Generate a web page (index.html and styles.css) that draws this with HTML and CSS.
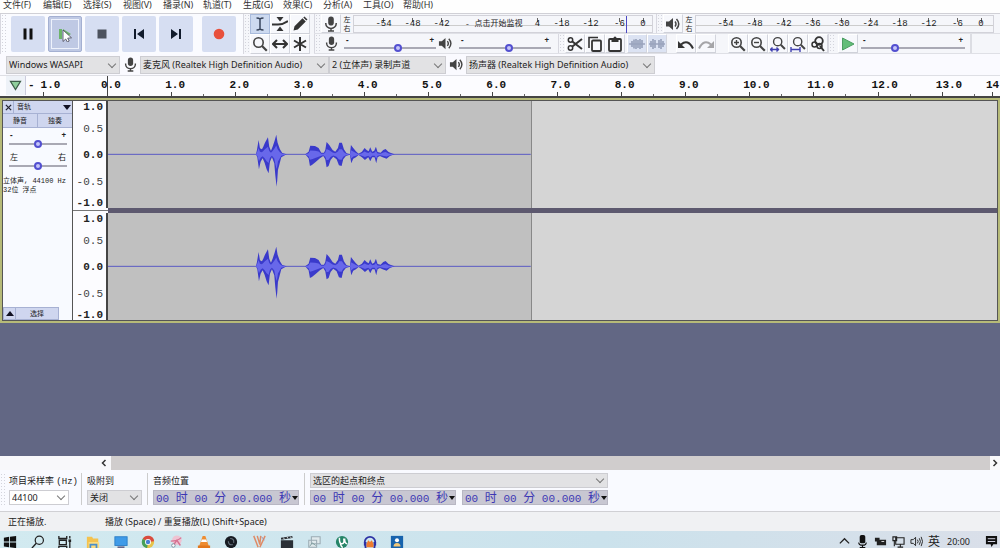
FILE: index.html
```html
<!DOCTYPE html>
<html lang="zh-CN">
<head>
<meta charset="utf-8">
<title>Audacity</title>
<link rel="stylesheet" href="styles.css">
</head>
<body>
<svg class="defs" aria-hidden="true">
  <symbol id="mic" viewBox="0 0 16 16"><rect x="5.2" y="0.5" width="5.6" height="9" rx="2.8" fill="#444"/><path d="M2.8 7v.8a5.2 4.6 0 0 0 10.4 0V7M8 12.4V15M5 15h6" fill="none" stroke="#444" stroke-width="1.5"/></symbol>
  <symbol id="speaker" viewBox="0 0 16 16"><path d="M1 5.500h3L8 2v12L4 10.500H1z" fill="#444"/><path d="M10 5.500q2 2.500 0 5M11.500 3q4.500 5 0 10" fill="none" stroke="#444" stroke-width="1.500"/></symbol>
  <symbol id="lens" viewBox="0 0 16 16"><circle cx="6.500" cy="6.500" r="4.700" fill="none" stroke="#444" stroke-width="1.600"/><path d="M10 10l4.800 4.800" stroke="#444" stroke-width="2.200"/></symbol>
  <defs>
    <path id="envelope" d="M48 103L51 90 56 60 60 85 66 88 70 80 75 68 84 52 88 80 93 92 98 80 104 62 109 44 113 68 120 88 127 99 140 103 124 112 118 135 114 150 112 180 110 200 106 165 103 130 96 112 90 125 86 160 80 148 74 128 68 115 62 125 57 148 52 112zM196 103L206 95 211 77 225 78 236 84 244 98 252 98 256 90 260 66 268 75 278 90 286 95 294 84 298 68 306 68 312 88 320 100 330 103 333 75 340 84 348 94 356 101 366 95 374 84 380 90 386 94 391 82 397 95 403 92 408 80 413 96 422 98 430 90 437 87 446 96 455 100 464 103 450 108 440 116 428 112 420 108 413 112 409 130 404 112 397 112 391 124 385 112 375 120 366 112 356 105 348 112 340 116 334 130 330 104 318 108 310 118 305 138 297 136 290 118 280 110 272 120 266 138 260 142 256 118 250 108 240 115 228 125 216 135 210 138 206 115z"/>
  </defs>
  <symbol id="wave" viewBox="-396 -57 1269 321" preserveAspectRatio="none">
    <path d="M-396 103H873" stroke="#5a5ac4" stroke-width="3"/>
    <use href="#envelope" fill="#3a3acb"/>
    <use href="#envelope" fill="#6868ea" transform="translate(0 57) scale(1 .45)"/>
  </symbol>
</svg>

<nav class="menu">
  <button>文件(F)</button><button>编辑(E)</button><button>选择(S)</button><button>视图(V)</button><button>播录(N)</button><button>轨道(T)</button><button>生成(G)</button><button>效果(C)</button><button>分析(A)</button><button>工具(O)</button><button>帮助(H)</button>
</nav>

<header class="toolbars">
  <div class="transport">
    <span class="grip"></span>
    <button class="big" aria-label="暂停"><svg viewBox="0 0 16 16"><path d="M3.500 2.500h3v11h-3zM9.500 2.500h3v11h-3z" fill="#111"/></svg></button>
    <button class="big active" aria-label="播放"><svg viewBox="0 0 16 16"><path d="M2 3h3v10H2zM6 3l8 5-8 5z" fill="#6db36b"/><path d="M6 4v11.500l2.700-2.500 1.700 3 1.800-1-1.500-2.800 3.800-.4z" fill="#fff" stroke="#445" stroke-width=".8"/></svg></button>
    <button class="big" aria-label="停止"><svg viewBox="0 0 16 16"><path d="M3.500 3.500h9v9h-9z" fill="#4c525e"/></svg></button>
    <button class="big" aria-label="跳到开头"><svg viewBox="0 0 16 16"><path d="M3 3h2v10H3zM13 3v10L6 8z" fill="#111b2c"/></svg></button>
    <button class="big" aria-label="跳到结尾"><svg viewBox="0 0 16 16"><path d="M11 3h2v10h-2zM3 3v10l7-5z" fill="#111b2c"/></svg></button>
    <button class="big record" aria-label="录制"><svg viewBox="0 0 16 16"><circle cx="8" cy="8" r="5.300" fill="#e8503c"/></svg></button>
  </div>
  <div class="tools">
    <span class="grip"></span>
    <div class="toolgrid">
      <button class="tool on" aria-label="选择工具"><svg viewBox="0 0 16 16"><path d="M4.500 2q2.500 0 3.500 1 1-1 3.500-1M8 3v10M4.500 14q2.500 0 3.500-1 1 1 3.500 1" fill="none" stroke="#39465c" stroke-width="1.500"/></svg></button>
      <button class="tool" aria-label="包络工具"><svg viewBox="0 0 16 16"><path d="M0 8.500h6q5 0 10-3.500" fill="none" stroke="#333" stroke-width="2"/><path d="M4.500 1h7L8 5.500zM4.500 15h7L8 10.500z" fill="#333"/></svg></button>
      <button class="tool" aria-label="绘制工具"><svg viewBox="0 0 16 16"><path d="M1.500 14.500l1-4.300 8-8 3.300 3.300-8 8zM11.300 1.600l1.200-1.100 3 3-1.200 1.100z" fill="#333"/></svg></button>
      <button class="tool" aria-label="缩放工具"><svg><use href="#lens"/></svg></button>
      <button class="tool" aria-label="时移工具"><svg viewBox="0 0 16 16"><path d="M2 8h12M5 4L1 8l4 4M11 4l4 4-4 4" fill="none" stroke="#333" stroke-width="2"/></svg></button>
      <button class="tool" aria-label="多功能工具"><svg viewBox="0 0 16 16"><path d="M8 1v14M2 4.500l12 7M14 4.500l-12 7" stroke="#333" stroke-width="2"/></svg></button>
    </div>
  </div>
  <div class="rows">
    <div class="row">
      <span class="grip"></span>
      <button class="tool" aria-label="录音电平"><svg><use href="#mic"/></svg></button>
      <span class="lr"><i>左</i><i>右</i></span>
      <div class="meter live"><span>-54</span><span>-48</span><span>-42</span><button class="monitor">-&nbsp;点击开始监视</button><span class="cut">4</span><span>-18</span><span>-12</span><span>-6</span><span>0</span></div>
      <span class="grip"></span>
      <button class="tool" aria-label="播放电平"><svg><use href="#speaker"/></svg></button>
      <span class="lr"><i>左</i><i>右</i></span>
      <div class="meter wide"><span>-54</span><span>-48</span><span>-42</span><span>-36</span><span>-30</span><span>-24</span><span>-18</span><span>-12</span><span>-6</span><span>0</span></div>
    </div>
    <div class="row">
      <span class="grip"></span>
      <span class="glyph"><svg><use href="#mic"/></svg></span>
      <label class="slide"><span class="pm"><b>-</b><b>+</b></span><input type="range" value="60" aria-label="录音音量"></label>
      <span class="glyph"><svg><use href="#speaker"/></svg></span>
      <label class="slide"><span class="pm"><b>-</b><b>+</b></span><input type="range" value="55" aria-label="播放音量"></label>
      <span class="grip edit"></span>
      <button class="tool" aria-label="剪切"><svg viewBox="0 0 16 16"><circle cx="3.500" cy="4" r="2.200" fill="none" stroke="#333" stroke-width="1.500"/><circle cx="3.500" cy="12" r="2.200" fill="none" stroke="#333" stroke-width="1.500"/><path d="M5 5.200l10 7.800M5 10.800L15 3" stroke="#333" stroke-width="2"/></svg></button>
      <button class="tool" aria-label="复制"><svg viewBox="0 0 16 16"><path d="M2 12V1.500h9" fill="none" stroke="#333" stroke-width="1.600"/><rect x="5" y="4.500" width="9" height="10.500" rx="1" fill="none" stroke="#333" stroke-width="1.800"/></svg></button>
      <button class="tool" aria-label="粘贴"><svg viewBox="0 0 16 16"><rect x="2" y="3" width="12" height="12" rx="1" fill="none" stroke="#333" stroke-width="1.800"/><path d="M4.500 2h2a1.500 1.500 0 0 1 3 0h2v4h-7z" fill="#333"/></svg></button>
      <button class="tool off trim" aria-label="修剪"><svg viewBox="0 0 16 16"><path d="M0 8h16M3 5v6M5 3.500v9M7 3v10M9 4v8M11 3v10M13 4v8" stroke="#9aa4bd" stroke-width="1.700"/></svg></button>
      <button class="tool off" aria-label="静音"><svg viewBox="0 0 16 16"><path d="M0 8h16M2 5v6M4 3v10M6 4v8M10 4v8M12 3v10M14 5v6" stroke="#9aa4bd" stroke-width="1.700"/></svg></button>
      <button class="tool undo" aria-label="撤销"><svg viewBox="0 0 16 16"><path d="M3 8.500q7-6 12 4" fill="none" stroke="#333" stroke-width="2"/><path d="M0 5v7h7z" fill="#333"/></svg></button>
      <button class="tool" aria-label="重做"><svg viewBox="0 0 16 16"><path d="M13 8.500Q6 2.500 1 12.500" fill="none" stroke="#a5a5a8" stroke-width="2"/><path d="M16 5v7H9z" fill="#a5a5a8"/></svg></button>
      <button class="tool zoomin" aria-label="放大"><svg viewBox="0 0 16 16"><use href="#lens" width="16" height="16"/><path d="M4 6.500h5M6.500 4v5" stroke="#444" stroke-width="1.400"/></svg></button>
      <button class="tool" aria-label="缩小"><svg viewBox="0 0 16 16"><use href="#lens" width="16" height="16"/><path d="M4 6.500h5" stroke="#444" stroke-width="1.400"/></svg></button>
      <button class="tool" aria-label="适应选区"><svg viewBox="0 0 16 16"><use href="#lens" x="2" width="14" height="14"/><path d="M0 13.500h9M2.500 11.500L.5 13.500l2 2M6.500 11.500l2 2-2 2" fill="none" stroke="#4040b0" stroke-width="1.400"/></svg></button>
      <button class="tool" aria-label="适应项目"><svg viewBox="0 0 16 16"><use href="#lens" x="2" width="14" height="14"/><path d="M1 13.500h9M1 11v5M10 11v5" fill="none" stroke="#4040b0" stroke-width="1.400"/></svg></button>
      <button class="tool" aria-label="切换缩放"><svg viewBox="0 0 16 16"><circle cx="9" cy="5" r="3.800" fill="none" stroke="#333" stroke-width="1.800"/><circle cx="4.500" cy="8.500" r="2.500" fill="none" stroke="#333" stroke-width="1.500"/><circle cx="9.500" cy="10" r="2.500" fill="none" stroke="#333" stroke-width="1.500"/><path d="M10 10l4 5" stroke="#333" stroke-width="2"/></svg></button>
      <span class="grip"></span>
      <button class="tool speed" aria-label="按速度播放"><svg viewBox="0 0 16 16"><path d="M2.500 2v12L14 8z" fill="#62bd78" stroke="#4c9d62"/></svg></button>
      <label class="slide long"><span class="pm"><b>-</b><b>+</b></span><input type="range" value="31" aria-label="播放速度"></label>
      <span class="end"></span>
    </div>
  </div>
</header>

<div class="devices">
  <span class="pick host"><select aria-label="音频主机"><option>Windows WASAPI</option></select></span>
  <span class="glyph"><svg><use href="#mic"/></svg></span>
  <span class="pick input"><select aria-label="录音设备"><option>麦克风 (Realtek High Definition Audio)</option></select></span>
  <span class="pick channels"><select aria-label="录音声道"><option>2 (立体声) 录制声道</option></select></span>
  <span class="glyph"><svg><use href="#speaker"/></svg></span>
  <span class="pick output"><select aria-label="播放设备"><option>扬声器 (Realtek High Definition Audio)</option></select></span>
</div>

<div class="ruler">
  <button class="pin" aria-label="固定播放头"><svg viewBox="0 0 14 12"><path d="M1.500 1.500h11L7 10.500z" fill="#8fcf9c" stroke="#3d5d48" stroke-width="1.300"/></svg></button>
  <div class="before"><span>-</span><span class="num">1.0</span></div>
  <div class="scale"><span class="zero">0.0</span><span>1.0</span><span>2.0</span><span>3.0</span><span>4.0</span><span>5.0</span><span>6.0</span><span>7.0</span><span>8.0</span><span>9.0</span><span>10.0</span><span>11.0</span><span>12.0</span><span>13.0</span><span>14</span></div>
</div>

<main class="project">
  <section class="track">
    <div class="panel">
      <div class="title"><button class="close" aria-label="关闭"><svg viewBox="0 0 8 8"><path d="M1 1l6 6M7 1L1 7" stroke="#223" stroke-width="1.500"/></svg></button><button class="name">音轨<svg viewBox="0 0 8 5"><path d="M0 0h8L4 5z" fill="#112"/></svg></button></div>
      <div class="pair"><button>静音</button><button>独奏</button></div>
      <label class="knob"><span class="pm"><b>-</b><b>+</b></span><input type="range" value="50" aria-label="增益"></label>
      <label class="knob"><span class="pm"><i>左</i><i>右</i></span><input type="range" value="50" aria-label="声像"></label>
      <p class="info">立体声, 44100 Hz<br>32位 浮点</p>
      <div class="foot"><button aria-label="折叠"><svg viewBox="0 0 8 5"><path d="M0 5h8L4 0z" fill="#112"/></svg></button><button class="pickall">选择</button></div>
    </div>
    <div class="channels-view">
      <div class="channel"><div class="levels"><b>1.0</b><span>0.5</span><b>0.0</b><span>-0.5</span><b>-1.0</b></div><div class="wave"><svg class="clip"><use href="#wave"/></svg></div></div>
      <div class="channel"><div class="levels"><b>1.0</b><span>0.5</span><b>0.0</b><span>-0.5</span><b>-1.0</b></div><div class="wave"><svg class="clip"><use href="#wave"/></svg></div></div>
    </div>
  </section>
</main>

<div class="hscroll"><button class="left" aria-label="向左"><svg viewBox="0 0 8 8"><path d="M5.500 1L2.500 4l3 3" fill="none" stroke="#333" stroke-width="1.500"/></svg></button><span class="thumb"></span><button aria-label="向右"><svg viewBox="0 0 8 8"><path d="M2.500 1l3 3-3 3" fill="none" stroke="#333" stroke-width="1.500"/></svg></button></div>

<section class="selection">
  <span class="grip"></span>
  <div class="field rate"><label for="rate">项目采样率 <code>(Hz)</code></label><span class="pick white"><select id="rate"><option>44100</option></select></span></div>
  <div class="field snap"><label for="snap">吸附到</label><span class="pick"><select id="snap"><option>关闭</option></select></span></div>
  <div class="field position"><span class="cap">音频位置</span><div class="time">00 <i>时</i> 00 <i>分</i> 00.000 <i>秒</i></div></div>
  <div class="field range"><span class="pick"><select aria-label="选区显示"><option>选区的起点和终点</option></select></span><div class="times"><div class="time">00 <i>时</i> 00 <i>分</i> 00.000 <i>秒</i></div><div class="time">00 <i>时</i> 00 <i>分</i> 00.000 <i>秒</i></div></div></div>
</section>

<footer class="status"><span class="state">正在播放.</span><span>播放 (Space) / 重复播放(L) (Shift+Space)</span></footer>

<div class="taskbar">
  <div class="apps">
    <button aria-label="开始"><svg viewBox="0 0 16 16"><path d="M1 3l6-1v5.500H1zM8 2l7-1v6.500H8zM1 8.500h6V14l-6-1zM8 8.500h7V15l-7-1z" fill="#111"/></svg></button>
    <button aria-label="搜索"><svg viewBox="0 0 16 16"><circle cx="9.500" cy="6" r="4.700" fill="none" stroke="#222" stroke-width="1.400"/><path d="M6 9.500L1 15" stroke="#222" stroke-width="1.600"/></svg></button>
    <button aria-label="任务视图"><svg viewBox="0 0 16 16"><path d="M1 1v3h9V1M1.500 6h8v5h-8zM1 15v-2h9v2M13.500 1v3M13.500 7v8" fill="none" stroke="#222" stroke-width="1.500"/><path d="M12 5h3v3h-3z" fill="#222"/></svg></button>
    <button aria-label="文件资源管理器"><svg viewBox="0 0 16 16"><path d="M1 2h6l1 2h6v11H1z" fill="#f4c24e"/><path d="M3 8h12v7H3z" fill="#fbdc80"/><path d="M5 15v-4h7v4" fill="none" stroke="#4c8fc9" stroke-width="2"/></svg></button>
    <button aria-label="此电脑"><svg viewBox="0 0 16 16"><rect x="1" y="2" width="14" height="10" fill="#3f9be8" stroke="#287cc5"/><path d="M4 14h8" stroke="#668" stroke-width="2"/></svg></button>
    <button aria-label="Chrome"><svg viewBox="0 0 16 16"><circle cx="8" cy="8" r="7" fill="#e6c34a"/><path d="M8 8L2 4.300A7 7 0 0 1 15 7z" fill="#d94b3f"/><path d="M8 8L2 4.300A7 7 0 0 0 7 15z" fill="#46a05a"/><circle cx="8" cy="8" r="3.400" fill="#fff"/><circle cx="8" cy="8" r="2.500" fill="#477fd6"/></svg></button>
    <button aria-label="截图"><svg viewBox="0 0 16 16"><circle cx="9" cy="6" r="5.500" fill="#eec3d2"/><path d="M2 7q8 0 12-4M4 13l5-7 4 6" fill="none" stroke="#d77293" stroke-width="1.600"/><circle cx="5" cy="12" r="2" fill="#fff" stroke="#789"/></svg></button>
    <button aria-label="VLC"><svg viewBox="0 0 16 16"><path d="M6.500 1h3L14 14H2z" fill="#ee8c30"/><path d="M5.500 5h5l1 3h-7z" fill="#fff"/><path d="M1 12h14v3H1z" fill="#e2771c"/></svg></button>
    <button aria-label="OBS"><svg viewBox="0 0 16 16"><circle cx="8" cy="8" r="7" fill="#171b22"/><path d="M7 4q5 0 4 5M10 11q-5 1-5-4" fill="none" stroke="#65707b" stroke-width="1.300"/></svg></button>
    <button aria-label="编辑器"><svg viewBox="0 0 16 16"><path d="M2 1l5 13M6 1l3 10M10 1l-1 9M15 1L9 14" stroke="#df8a65" stroke-width="1.700"/><path d="M11 2l3 4" stroke="#98a" /></svg></button>
    <button aria-label="视频"><svg viewBox="0 0 16 16"><path d="M1 6h14v9H1zM1 3l13-2 .4 2.500L1.400 5.500z" fill="#2b3036"/><path d="M4 3l1 2M8 2l1 2M12 2l1 2" stroke="#eee"/></svg></button>
    <button aria-label="图片"><svg viewBox="0 0 16 16"><path d="M5 2h10v8H5zM2 6h9v8H2z" fill="#dfe9ec" stroke="#9babb3" stroke-width="1.200"/><path d="M3 13l3-4 4 3" fill="none" stroke="#799"/></svg></button>
    <button aria-label="uTorrent"><svg viewBox="0 0 16 16"><circle cx="8" cy="8" r="7" fill="#268568"/><path d="M5 3q0 8 3 7 3 0 2-6M11 4q0 6 3 6M6 9q1 5 3 5" fill="none" stroke="#fff" stroke-width="1.700"/></svg></button>
    <button aria-label="Audacity"><svg viewBox="0 0 16 16"><path d="M2 12V8a6 6 0 0 1 12 0v4" fill="none" stroke="#2d31a4" stroke-width="2"/><path d="M1 8h3v7H2zM12 8h3l-1 7h-2z" fill="#2d31a4"/><path d="M4 10l2-4 2 2 2-2 2 4v4H4z" fill="#ee7b2d"/></svg></button>
    <button aria-label="用户"><svg viewBox="0 0 16 16"><path d="M1 1h14v15H1z" fill="#1763ad"/><circle cx="8" cy="6" r="2.300" fill="#fff"/><path d="M4 13q0-4 4-4t4 4z" fill="#f1c779"/></svg></button>
  </div>
  <div class="tray">
    <svg viewBox="0 0 14 14"><path d="M2 9l5-5 5 5" fill="none" stroke="#222" stroke-width="1.400"/></svg>
    <svg viewBox="0 0 14 14"><rect x="4" y="0" width="6" height="9" rx="2" fill="#111"/><path d="M3 8q0 3 4 3t4-3M7 11v3M4 13.500h6" stroke="#111" stroke-width="1.300" fill="none"/></svg>
    <svg viewBox="0 0 14 14"><path d="M3 5h10v6H3zM1 3h5v4H1z" fill="#222"/><path d="M8 7h3" stroke="#ddd"/></svg>
    <svg viewBox="0 0 14 14"><path d="M4 3h9v7H4zM6 13h6M9 10v3M1 2h4v4H1zM2.500 6v6" fill="none" stroke="#222" stroke-width="1.200"/></svg>
    <svg viewBox="0 0 14 14"><path d="M1 5h2.500L6 2.500v9L3.500 9H1zM8 5q1.500 2 0 4M10 3.500q2.500 3.500 0 7M12 2q3 5 0 10" fill="none" stroke="#222"/></svg>
    <span class="ime">英</span><span class="clock">20:00</span>
    <svg class="note" viewBox="0 0 14 14"><path d="M1 1h12v9H9l-2 3-1-3H1z" fill="#111"/><path d="M3 4h8M3 7h8" stroke="#dde" /></svg>
  </div>
</div>
</body>
</html>
```
FILE: styles.css
```css
* { box-sizing: border-box; }
html, body { height: 100%; }
body {
  margin: 0;
  display: flex;
  flex-direction: column;
  overflow: hidden;
  background: #f5f6fa;
  color: #222;
  font: 9px/12px "Noto Sans", "Noto Sans CJK SC", sans-serif;
}
button, select, input { font: inherit; color: inherit; margin: 0; }
button { border: 0; padding: 0; background: none; }
i { font-style: normal; }
code { font-family: "Liberation Mono", monospace; }
svg { display: block; }
.defs { position: absolute; width: 0; height: 0; }

.menu { display: flex; flex: none; height: 13px; padding-left: 3px; background: #fefefe; }
.menu button { width: 40px; height: 10px; line-height: 10px; text-align: left; white-space: nowrap; color: #333; }

.grip {
  flex: none;
  width: 7px;
  align-self: stretch;
  border-left: 1px solid #d8d8e0;
  background: radial-gradient(circle, #d3d4dc 1px, transparent 1px) 0 0 / 3px 3px;
}
.toolbars { display: flex; flex: none; height: 41px; border-top: 1px solid #d0d0d6; }
.transport { display: flex; align-items: center; gap: 3px; flex: none; width: 243px; background: #fafbff; }
.transport .grip { margin-right: 1px; }
.big { display: grid; place-items: center; width: 34px; height: 36px; background: #d6def2; border-radius: 2px; }
.big svg { width: 16px; height: 16px; }
.big.active { background: #bfc9e4; border: 1px solid #a4b0d2; outline: 1px solid #eef2fc; outline-offset: -4px; }
.big.record { margin-left: 6px; }
.tools { display: flex; flex: none; width: 71px; }
.toolgrid { display: grid; grid-template-columns: repeat(3, 20px); grid-template-rows: 20px 20px; }
.tool {
  display: grid;
  place-items: center;
  flex: none;
  width: 20px;
  height: 20px;
  background: #f7f8fc;
  border: 1px solid;
  border-color: #fff #d3d5dd #cfd1d9 #fff;
}
.tool svg { width: 16px; height: 16px; }
.tool.on { background: #cddaf0; border-color: #a9bbdc; }
.tool.off { background: #dce3f3; }
.tool.trim { margin-left: 2px; }
.tool.undo { margin-left: 9px; }
.tool.zoomin { margin-left: 12px; }
.rows { flex: 1; min-width: 0; }
.row { display: flex; align-items: center; height: 20px; border-bottom: 1px solid #dfe0e6; }
.row .tool { height: 19px; }
.lr { display: flex; flex-direction: column; flex: none; width: 12px; font-size: 7px; line-height: 9px; text-align: center; }
.meter {
  position: relative;
  display: flex;
  flex: none;
  width: 300px;
  height: 18px;
  margin-right: 3px;
  padding-left: 15px;
  border: 1px solid #d2d2d9;
  font: 9px/16px "Liberation Mono", monospace;
  background: linear-gradient(#ccc, #ccc) 0 9px / 100% 1px no-repeat;
}
.meter span { flex: none; width: 29px; text-align: center; background: linear-gradient(#666, #666) 50% 2px / 1px 4px no-repeat; }
.meter span:last-child { width: 18px; }
.meter.wide { flex: 1; margin-right: 6px; }
.live::after { content: ""; position: absolute; right: 25px; top: 0; width: 1px; height: 17px; background: #4c49c4; }
.monitor { flex: none; width: 72px; padding-left: 9px; font: 8px/16px "Liberation Mono", "Noto Sans CJK SC", monospace; white-space: nowrap; text-align: left; }
.meter .cut { width: 19px; }
.glyph { display: grid; place-items: center; flex: none; width: 20px; }
.glyph svg { width: 15px; height: 15px; }
.slide { display: block; flex: none; width: 92px; margin-left: 3px; }
.row .slide + .glyph { margin-right: 1px; margin-left: -1px; }
.pm { display: flex; justify-content: space-between; height: 9px; padding: 0 2px; font-size: 8px; line-height: 9px; }
input[type=range] { appearance: none; display: block; width: 100%; height: 9px; background: none; }
input[type=range]::-webkit-slider-runnable-track { height: 2px; background: #a9a9b4; }
input[type=range]::-webkit-slider-thumb { appearance: none; width: 8px; height: 8px; margin-top: -3px; border: 2px solid #5350d0; border-radius: 50%; background: #c5c5fa; }
.grip.edit { margin-left: 7px; }
.tool.speed { margin-left: 3px; }
.slide.long { width: 104px; }
.end { align-self: stretch; margin-left: 5px; border-left: 2px solid #dcdde3; }

.devices { display: flex; align-items: center; flex: none; height: 22px; padding-left: 6px; background: #fafaff; border-bottom: 1px solid #dedfe5; }
.pick { position: relative; display: block; }
.pick select { appearance: none; display: block; width: 100%; height: 18px; padding: 0 2px; border: 1px solid #cdcdd2; border-radius: 0; background: #e2e2e4; }
.pick::after { content: ""; position: absolute; right: 5px; top: 5px; width: 5px; height: 5px; border: solid #777; border-width: 0 1px 1px 0; transform: rotate(45deg); pointer-events: none; }
.pick.host { width: 114px; }
.pick.input { width: 189px; }
.pick.channels { width: 117px; }
.pick.output { width: 189px; }

.ruler { display: flex; flex: none; height: 22px; padding-left: 6px; overflow: hidden; background: #fcfcff; border-bottom: 2px solid #444; font: bold 11px/19px "Liberation Mono", monospace; color: #111; }
.pin { display: grid; place-items: center; width: 20px; height: 19px; border-right: 1px solid #ccd; background: #eef2f8; }
.pin svg { width: 13px; height: 11px; }
.before { display: flex; gap: 3px; width: 81px; padding-left: 2px; }
.before .num { width: 30px; padding-left: 3px; background: linear-gradient(#444, #444) 5px 100% / 1px 4px no-repeat; }
.scale { display: grid; grid-template-columns: repeat(14, 1fr) 20px; flex: 1; margin-right: -26px; }
.scale span { margin-left: -6px; margin-right: 6px; background: linear-gradient(#444, #444) 6px 100% / 1px 4px no-repeat, linear-gradient(#666, #666) 38px 100% / 1px 2px no-repeat; }
.scale .zero { background-size: 1px 100%, 1px 2px; }
.scale span:last-child { margin-left: -20px; }

.project { flex: 1; min-height: 0; background: #626784; }
.track { display: flex; border: solid #b6ba78; border-width: 3px 2px 3px 2px; outline: 1px solid #555; outline-offset: -3px; height: 225px; }
.panel { display: flex; flex-direction: column; flex: none; width: 71px; padding-left: 1px; background: #f8faff; border-right: 1px solid #555; font-size: 8px; }
.title { display: flex; height: 13px; background: #cfd6ef; border-bottom: 1px solid #a7b1d3; }
.close { display: grid; place-items: center; width: 11px; border-right: 1px solid #a7b1d3; }
.close svg { width: 7px; height: 7px; }
.name { display: flex; align-items: center; justify-content: space-between; flex: 1; padding: 0 1px 0 3px; font-size: 7px; }
.name svg { width: 8px; height: 5px; }
.pair { display: flex; height: 14px; margin-bottom: 2px; background: #cfd6ef; border-bottom: 1px solid #a7b1d3; font-size: 7px; }
.pair button { flex: 1; }
.pair button + button { border-left: 1px solid #a7b1d3; }
.knob { display: block; height: 22px; padding: 0 5px 0 6px; font-size: 7px; }
.knob .pm { font-size: 8px; padding: 0 1px; }
.info { margin: 3px 0 0; font: 7px/9px "Liberation Mono", "Noto Sans CJK SC", monospace; white-space: nowrap; }
.foot { display: flex; height: 13px; width: 56px; margin-top: auto; background: #cfd6ef; border: 1px solid #a7b1d3; font-size: 7px; line-height: 11px; }
.foot svg { width: 8px; height: 5px; margin: auto; }
.foot button { width: 11px; }
.foot .pickall { flex: 1; border-left: 1px solid #a7b1d3; }
.channels-view { display: flex; flex-direction: column; flex: 1; gap: 5px; background: #5d596f; }
.channel { display: flex; flex: 1; }
.levels { display: grid; grid-template-rows: 12px 31px 21px 33px 10px; align-items: center; width: 35px; padding-right: 3px; text-align: right; background: #fcfcff; border-right: 2px solid #444; font: 11px/10px "Liberation Mono", monospace; }
.levels span { color: #444; }
.channel:first-child .levels { box-shadow: 0 2px #fcfcff, 0 3px #777; }
.channel:last-child .levels { box-shadow: 0 -2px #fcfcff; }
.wave { display: flex; flex: 1; background: #d5d5d5; border-right: 1px solid #555; }
.wave::after { content: ""; flex: 11 1 0; }
.clip { flex: 10 1 0; min-width: 0; height: 107px; background: #c0c0c0; border-right: 1px solid #888; }

.hscroll { display: flex; flex: none; height: 14px; background: #f8f8fa; }
.hscroll button { flex: none; width: 10px; }
.hscroll svg { width: 8px; height: 8px; margin: auto; }
.hscroll .left { margin-left: 99px; margin-right: 2px; }
.thumb { flex: 1; background: #d0cdcd; }

.selection { display: flex; flex: none; height: 42px; padding: 3px 0 6px; background: #f9faff; border-bottom: 1px solid #d0d0d4; }
.selection > .grip { margin-right: 3px; width: 5px; border-left: 0; }
.field { display: flex; flex-direction: column; justify-content: space-between; padding-right: 5px; border-right: 1px solid #ccc; margin-right: 5px; }
.field label, .cap { line-height: 15px; white-space: nowrap; }
.field.rate { width: 73px; margin-left: 1px; }
.field.rate .pick { width: 60px; }
.field.snap { width: 61px; }
.field.position { width: 152px; }
.field.range { border: 0; width: 303px; }
.selection .pick select { height: 15px; line-height: 12px; }
.selection .pick::after { top: 3px; }
.selection .white select { background: #fff; }
.times { display: flex; justify-content: space-between; }
.time { position: relative; width: 146px; height: 15px; padding-left: 2px; white-space: pre; background: #c8c7d2; border: 1px solid #b8b7c3; font: 11px/13px "Liberation Mono", monospace; color: #3d37b4; }
.time i { font: 12px/12px "Noto Sans CJK SC", sans-serif; }
.time::after { content: ""; position: absolute; right: 0; top: 5px; border: 3px solid transparent; border-top: 4px solid #111; }

.status { display: flex; flex: none; height: 19px; padding-left: 8px; line-height: 20px; background: #f0f1f3; }
.state { width: 97px; }

.taskbar { display: flex; justify-content: space-between; flex: none; height: 17px; padding-top: 4px; overflow: hidden; background: linear-gradient(90deg, #d2eaf0, #cbe2ec 60%, #dadfe9); }
.apps { display: flex; width: 415px; margin-left: -4px; }
.apps button { flex: 1; }
.apps svg { width: 14px; height: 14px; margin: auto; }
.tray { display: flex; gap: 5px; padding-right: 2px; line-height: 13px; }
.tray svg { width: 13px; height: 13px; }
.ime { font-size: 12px; }
.clock { width: 27px; margin-left: 2px; }
.tray .note { margin-left: 6px; }
```
